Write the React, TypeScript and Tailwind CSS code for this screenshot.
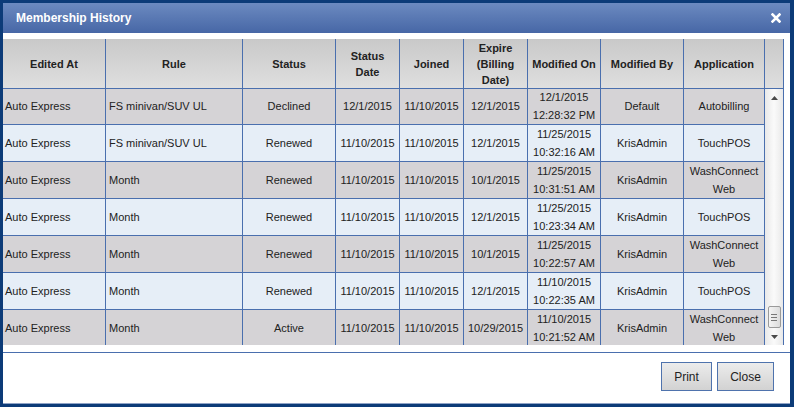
const rows = [
  ["Auto Express", "FS minivan/SUV UL", "Declined", "12/1/2015", "11/10/2015", "12/1/2015", "12/1/2015 12:28:32 PM", "Default", "Autobilling"],
  ["Auto Express", "FS minivan/SUV UL", "Renewed", "11/10/2015", "11/10/2015", "12/1/2015", "11/25/2015 10:32:16 AM", "KrisAdmin", "TouchPOS"],
  ["Auto Express", "Month", "Renewed", "11/10/2015", "11/10/2015", "10/1/2015", "11/25/2015 10:31:51 AM", "KrisAdmin", "WashConnect Web"],
  ["Auto Express", "Month", "Renewed", "11/10/2015", "11/10/2015", "12/1/2015", "11/25/2015 10:23:34 AM", "KrisAdmin", "TouchPOS"],
  ["Auto Express", "Month", "Renewed", "11/10/2015", "11/10/2015", "10/1/2015", "11/25/2015 10:22:57 AM", "KrisAdmin", "WashConnect Web"],
  ["Auto Express", "Month", "Renewed", "11/10/2015", "11/10/2015", "12/1/2015", "11/10/2015 10:22:35 AM", "KrisAdmin", "TouchPOS"],
  ["Auto Express", "Month", "Active", "11/10/2015", "11/10/2015", "10/29/2015", "11/10/2015 10:21:52 AM", "KrisAdmin", "WashConnect Web"],
];

const headers = ["Edited At", "Rule", "Status", "Status Date", "Joined", "Expire (Billing Date)", "Modified On", "Modified By", "Application"];

const cols = "grid grid-cols-[103px_137px_93px_64px_64px_64px_73px_83px_81px]";

const App = () => {
  return (
    <div className="w-[794px] h-[407px] bg-[#0c3b78] pt-[3px] pl-[3px] pr-[4px] pb-[3px] font-['Liberation_Sans',Arial,sans-serif]">
      <div className="h-full bg-white flex flex-col">
        {/* title bar */}
        <div className="h-[30px] flex items-center justify-between pl-[13px] pr-[9px] bg-gradient-to-b from-[#6c8ac0] to-[#4767a6]">
          <span className="text-white font-bold text-[12px]">Membership History</span>
          <svg width="10" height="10" viewBox="0 0 10 10">
            <path d="M1.5 1.5 L8.5 8.5 M8.5 1.5 L1.5 8.5" stroke="white" strokeWidth="2.6" strokeLinecap="square" />
          </svg>
        </div>

        <div className="h-[6px]" />

        {/* grid */}
        <div className="w-[781px] border-r border-[#4a6fae] text-[11px] text-[#222]">
          <div className="flex border-b border-[#4a6fae] bg-gradient-to-b from-[#c9c9c9] to-[#dfdfdf]">
            <div className={cols}>
              {headers.map((h, i) => (
                <div
                  key={i}
                  className="h-[49px] flex items-center justify-center text-center font-bold leading-[16px] border-r border-[#4a6fae] px-[4px]"
                >
                  {h}
                </div>
              ))}
            </div>
            <div className="w-[18px]" />
          </div>

          <div className="flex h-[256px] overflow-hidden">
            <div className="-mt-[1px]">
              {rows.map((r, ri) => (
                <div
                  key={ri}
                  className={`${cols} border-b border-[#4a6fae] ${ri % 2 === 0 ? "bg-[#d5d3d6]" : "bg-[#e6eef7]"}`}
                >
                  {r.map((c, ci) => (
                    <div
                      key={ci}
                      className={`h-[36px] flex items-center leading-[18px] border-r border-[#4a6fae] ${
                        ci === 0 ? "pl-[2px]" : ci === 1 ? "pl-[3px]" : "justify-center text-center px-[1px]"
                      }`}
                    >
                      {c}
                    </div>
                  ))}
                </div>
              ))}
            </div>

            {/* scrollbar */}
            <div className="w-[18px] flex flex-col items-center bg-gradient-to-r from-[#e9e9e9] via-[#fafafa] to-[#e9e9e9]">
              <div className="h-[17px] flex items-center justify-center">
                <svg width="7" height="4" viewBox="0 0 7 4">
                  <path d="M3.5 0 L7 4 L0 4 Z" fill="#4a4a4a" />
                </svg>
              </div>
              <div className="flex-1" />
              <div className="w-[13px] h-[22px] rounded-[2px] border border-[#9a9a9a] bg-gradient-to-r from-[#f4f4f4] to-[#dcdcdc] flex flex-col items-center justify-center gap-[2px]">
                <div className="w-[6px] h-[1px] bg-[#777]" />
                <div className="w-[6px] h-[1px] bg-[#777]" />
                <div className="w-[6px] h-[1px] bg-[#777]" />
              </div>
              <div className="h-[17px] flex items-center justify-center">
                <svg width="7" height="4" viewBox="0 0 7 4">
                  <path d="M0 0 L7 0 L3.5 4 Z" fill="#4a4a4a" />
                </svg>
              </div>
            </div>
          </div>
        </div>

        <div className="h-[7px]" />

        {/* footer */}
        <div className="flex-1 border-t border-[#4a6fae] flex justify-end items-start gap-[5px] pt-[9px] pr-[16px]">
          <button className="w-[51px] h-[29px] border border-[#4f73ad] bg-gradient-to-b from-[#ececec] to-[#d2d2d2] text-[12px] text-[#222]">
            Print
          </button>
          <button className="w-[57px] h-[29px] border border-[#4f73ad] bg-gradient-to-b from-[#ececec] to-[#d2d2d2] text-[12px] text-[#222]">
            Close
          </button>
        </div>
        <div className="h-[1px] bg-[#8fa3c6]" />
      </div>
    </div>
  );
};

export default App;
